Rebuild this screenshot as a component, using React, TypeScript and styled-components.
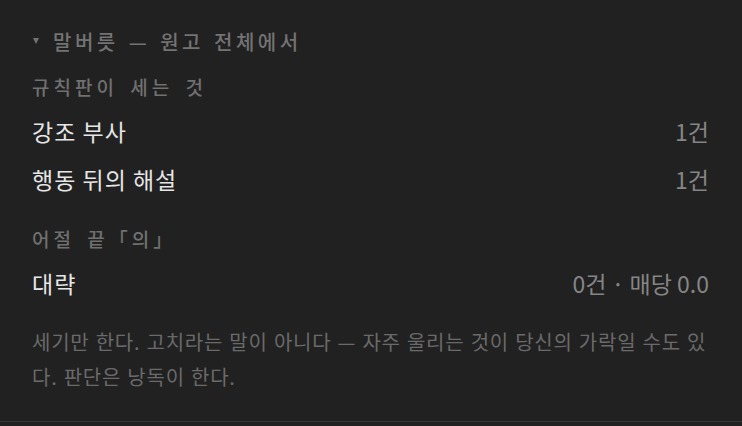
import React from "react";
import styled, { createGlobalStyle } from "styled-components";

const GlobalStyle = createGlobalStyle`
    html, body {
        margin: 0;
        padding: 0;
        background: #212121;
    }
    body {
        font-family: "Noto Sans CJK KR", "Noto Sans", sans-serif;
        -webkit-font-smoothing: antialiased;
    }
`;

const Panel = styled.section`
    display: flex;
    flex-direction: column;
    width: 742px;
    box-sizing: border-box;
    padding: 25px 33px 27px 32px;
    background-color: #212121;
    border-bottom: 1px solid #353535;
`;

const Summary = styled.div`
    display: flex;
    align-items: center;
    gap: 14px;
    height: 32px;
    color: #737373;
    font-size: 20px;
    font-weight: 500;
    letter-spacing: 3.5px;
    word-spacing: 2px;
`;

const Caret = styled.span`
    width: 0;
    height: 0;
    border-left: 3.5px solid transparent;
    border-right: 3.5px solid transparent;
    border-top: 6px solid #737373;
    margin-left: 1px;
`;

const Group = styled.div<{ $first?: boolean }>`
    display: flex;
    flex-direction: column;
    margin-top: ${(p) => (p.$first ? "14px" : "20px")};
`;

const GroupLabel = styled.div`
    height: 32px;
    line-height: 32px;
    margin-bottom: 4px;
    color: #707070;
    font-size: 19px;
    font-weight: 500;
    letter-spacing: 4px;
    word-spacing: 4px;
`;

const Row = styled.div`
    display: flex;
    justify-content: space-between;
    align-items: center;
    height: 48px;
    font-size: 23px;
`;

const Name = styled.span`
    color: #e6e6e6;
    letter-spacing: 1px;
`;

const Count = styled.span`
    color: #858585;
`;

const Note = styled.p`
    margin: 17px 0 0;
    color: #6a6a6a;
    font-size: 20px;
    line-height: 35px;
    letter-spacing: 0.75px;
    word-spacing: 1px;
`;

type Item = { name: string; value: string };

const groups: { label: string; items: Item[] }[] = [
    {
        label: "규칙판이 세는 것",
        items: [
            { name: "강조 부사", value: "1건" },
            { name: "행동 뒤의 해설", value: "1건" },
        ],
    },
    {
        label: "어절 끝「의」",
        items: [{ name: "대략", value: "0건 · 매당 0.0" }],
    },
];

export default function App() {
    return (
        <>
            <GlobalStyle />
            <Panel>
                <Summary>
                    <Caret />
                    <span>말버릇 — 원고 전체에서</span>
                </Summary>
                {groups.map((g, i) => (
                    <Group key={g.label} $first={i === 0}>
                        <GroupLabel>{g.label}</GroupLabel>
                        {g.items.map((it) => (
                            <Row key={it.name}>
                                <Name>{it.name}</Name>
                                <Count>{it.value}</Count>
                            </Row>
                        ))}
                    </Group>
                ))}
                <Note>
                    세기만 한다. 고치라는 말이 아니다 — 자주 울리는 것이 당신의 가락일 수도 있다. 판단은 낭독이 한다.
                </Note>
            </Panel>
        </>
    );
}
